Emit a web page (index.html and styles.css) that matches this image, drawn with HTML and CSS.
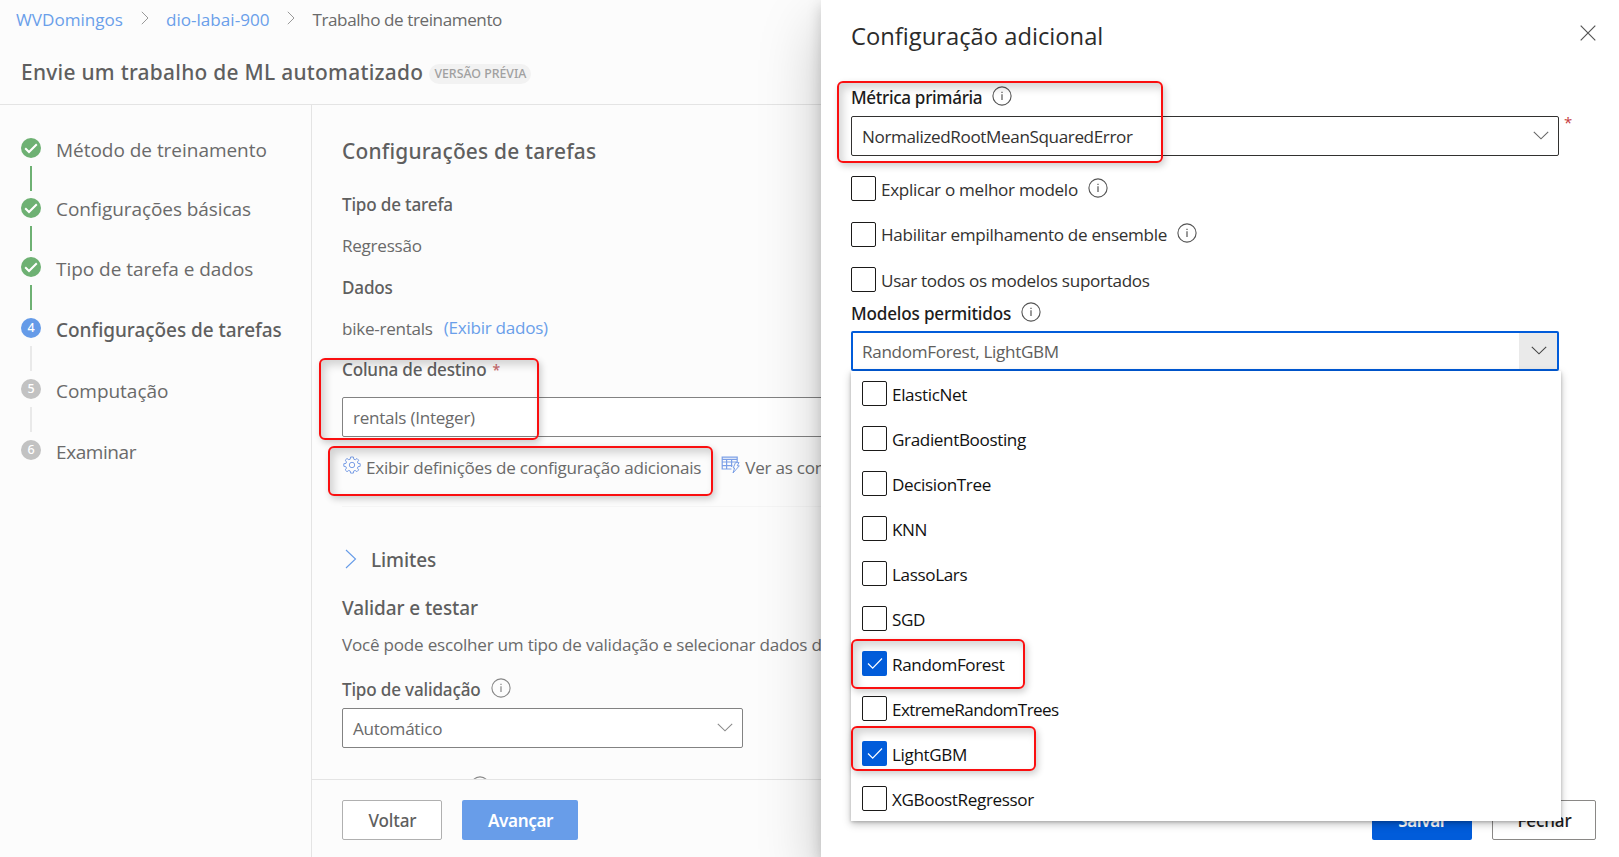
FILE: index.html
```html
<!DOCTYPE html>
<html lang="pt-BR">
<head>
<meta charset="utf-8">
<title>Envie um trabalho de ML automatizado</title>
<link rel="stylesheet" href="styles.css">
</head>
<body>
<svg class="defs" width="0" height="0">
  <symbol id="info" viewBox="0 0 20 20"><circle cx="10" cy="10" r="9.1" fill="none" stroke="currentColor" stroke-width="1.1"/><path d="M10 8.2V14M10 5.7V7" fill="none" stroke="currentColor" stroke-width="1.2"/></symbol>
  <symbol id="down" viewBox="0 0 16 9"><path d="M.8.8L8 7.8L15.2.8" fill="none" stroke="currentColor" stroke-width="1.1"/></symbol>
  <symbol id="right" viewBox="0 0 8 14"><path d="M.8.8L7 7L.8 13.2" fill="none" stroke="currentColor" stroke-width="1"/></symbol>
  <symbol id="done" viewBox="0 0 20 20"><circle cx="10" cy="10" r="10" fill="#6eb173"/><path d="M4.2 10.3L8 14L15.8 6.2" fill="none" stroke="#fff" stroke-width="2"/></symbol>
  <symbol id="tick" viewBox="0 0 25 25"><path d="M6 12.5L10.7 17.2L20 7.5" fill="none" stroke="#fff" stroke-width="1.2"/></symbol>
</svg>

<div class="page">
  <nav class="crumbs">
    <a class="link wide">WVDomingos</a><svg class="crumb-sep"><use href="#right"/></svg>
    <a class="link wide">dio-labai-900</a><svg class="crumb-sep"><use href="#right"/></svg>
    <span class="current">Trabalho de treinamento</span>
  </nav>
  <header class="title-row">
    <h1>Envie um trabalho de ML automatizado</h1>
    <span class="badge">VERSÃO PRÉVIA</span>
  </header>
  <div class="body">
    <aside class="steps">
      <div class="step done"><div class="rail"><svg class="dot"><use href="#done"/></svg><i></i></div><span>Método de treinamento</span></div>
      <div class="step done"><div class="rail"><svg class="dot"><use href="#done"/></svg><i></i></div><span class="raised">Configurações básicas</span></div>
      <div class="step done"><div class="rail"><svg class="dot"><use href="#done"/></svg><i></i></div><span>Tipo de tarefa e dados</span></div>
      <div class="step active"><div class="rail"><b class="dot">4</b><i></i></div><span>Configurações de tarefas</span></div>
      <div class="step"><div class="rail"><b class="dot">5</b><i></i></div><span>Computação</span></div>
      <div class="step last"><div class="rail"><b class="dot">6</b></div><span>Examinar</span></div>
    </aside>
    <main class="main">
      <section class="content">
        <h2>Configurações de tarefas</h2>
        <div class="row strong mt-task">Tipo de tarefa</div>
        <div class="row mt-a">Regressão</div>
        <div class="row strong mt-b">Dados</div>
        <div class="row mt-a">bike-rentals <a class="link data-link">(Exibir dados)</a></div>
        <div class="row strong mt-a">Coluna de destino <span class="req">*</span></div>
        <div class="field target">rentals (Integer)</div>
        <div class="row actions">
          <svg class="gear" viewBox="0 0 18 18"><g fill="none" stroke="currentColor"><path d="M7.6 1H10.4L10.8 3.2L12.2 3.8L14 2.5L15.7 4.2L14.4 6L15 7.4L17.2 7.7V10.3L15 10.7L14.4 12.1L15.7 13.9L13.9 15.7L12.1 14.4L10.7 15L10.4 17.1H7.6L7.2 15L5.8 14.4L4 15.7L2.2 13.9L3.5 12.1L2.9 10.7L.8 10.3V7.7L3 7.4L3.5 6L2.2 4.2L4 2.5L5.8 3.7L7.2 3.2Z"/><circle cx="9" cy="9" r="2.7"/></g></svg>
          <span class="action">Exibir definições de configuração adicionais</span>
          <svg class="sheet" viewBox="0 0 19 18"><path d="M10.5 13H1.2V1.2H16.2V6M1 3.3H16.2M1.2 6H16M1.2 9.6H11.5M5.6 3.3V13M10.6 3.3V11" fill="none" stroke="currentColor" stroke-width="1.2"/><path d="M14.5 6.6H18L16.2 9.8H18.3L12 17L13.6 12H12.2Z" fill="#fcfcfc" stroke="currentColor"/></svg>
          <span class="action">Ver as configurações</span>
        </div>
        <hr>
        <div class="row big limits"><svg class="expand" viewBox="0 0 12 20"><path d="M1 1L10.5 10L1 19" fill="none" stroke="currentColor" stroke-width="1.1"/></svg>Limites</div>
        <div class="row big mt-validate">Validar e testar</div>
        <div class="row mt-desc">Você pode escolher um tipo de validação e selecionar dados de teste</div>
        <div class="row strong mt-type">Tipo de validação <svg class="info"><use href="#info"/></svg></div>
        <div class="field validation">Automático <svg class="caret"><use href="#down"/></svg></div>
        <div class="cut"><svg class="info"><use href="#info"/></svg></div>
      </section>
      <footer class="footer">
        <button class="btn">Voltar</button>
        <button class="btn primary">Avançar</button>
      </footer>
    </main>
  </div>
</div>

<aside class="panel">
  <div class="panel-head">
    <h2>Configuração adicional</h2>
    <svg class="close" viewBox="0 0 16 16"><path d="M.7.7L15.3 15.3M15.3.7L.7 15.3" stroke="currentColor" stroke-width="1.2"/></svg>
  </div>
  <div class="row strong metric-label">Métrica primária <svg class="info"><use href="#info"/></svg></div>
  <div class="metric"><div class="field">NormalizedRootMeanSquaredError <svg class="caret"><use href="#down"/></svg></div><span class="star">*</span></div>
  <div class="checks">
    <div class="check"><i class="box"></i><span>Explicar o melhor modelo</span><svg class="info"><use href="#info"/></svg></div>
    <div class="check"><i class="box"></i><span>Habilitar empilhamento de ensemble</span><svg class="info"><use href="#info"/></svg></div>
    <div class="check"><i class="box"></i><span>Usar todos os modelos suportados</span></div>
  </div>
  <div class="row strong models-label">Modelos permitidos <svg class="info"><use href="#info"/></svg></div>
  <div class="combo">
    <div class="field focus"><span>RandomForest, LightGBM</span><div class="toggle"><svg class="caret"><use href="#down"/></svg></div></div>
    <div class="menu">
      <div class="check"><i class="box"></i><span>ElasticNet</span></div>
      <div class="check"><i class="box"></i><span>GradientBoosting</span></div>
      <div class="check"><i class="box"></i><span>DecisionTree</span></div>
      <div class="check"><i class="box"></i><span>KNN</span></div>
      <div class="check"><i class="box"></i><span>LassoLars</span></div>
      <div class="check"><i class="box"></i><span>SGD</span></div>
      <div class="check"><i class="box on"><svg><use href="#tick"/></svg></i><span>RandomForest</span></div>
      <div class="check tight"><i class="box"></i><span>ExtremeRandomTrees</span></div>
      <div class="check"><i class="box on"><svg><use href="#tick"/></svg></i><span>LightGBM</span></div>
      <div class="check"><i class="box"></i><span>XGBoostRegressor</span></div>
    </div>
  </div>
  <div class="panel-foot">
    <button class="btn primary">Salvar</button>
    <button class="btn">Fechar</button>
  </div>
</aside>

<div class="mark mark-target"></div>
<div class="mark mark-settings"></div>
<div class="mark mark-metric"></div>
<div class="mark mark-forest"></div>
<div class="mark mark-light"></div>
</body>
</html>
```
FILE: styles.css
```css
* { box-sizing: border-box; }
body {
  margin: 0;
  width: 1619px;
  height: 857px;
  overflow: hidden;
  position: relative;
  background: #fcfcfc;
  color: #6a6a6a;
  font: 400 17.1px/24px "Open Sans", "Noto Sans", sans-serif;
  letter-spacing: -.27px;
  white-space: nowrap;
}
svg { display: block; flex: none; }
.defs { position: absolute; }
h1, h2 { margin: 0; font: 500 20.9px/30px "Noto Sans", sans-serif; letter-spacing: .2px; color: #5f5f5f; }
h1 { padding-top: 2px; letter-spacing: .28px; }
.link { color: #6a9fea; }
.wide { letter-spacing: 0; }

.page { height: 857px; display: flex; flex-direction: column; }
.crumbs { height: 39px; display: flex; align-items: center; padding-left: 16px; }
.crumb-sep { width: 8px; height: 14px; margin: -3px 17px 0 18px; color: #999; }
.current { letter-spacing: -.42px; }
.title-row { height: 66px; padding: 0 0 1px 21px; display: flex; align-items: center; border-bottom: 1px solid #e4e4e4; }
.badge {
  margin: 6px 0 0 6px; height: 20px; padding: 0 5px; border-radius: 10px; background: #f2f2f2;
  font: 500 12.35px/20px "Noto Sans", sans-serif; letter-spacing: 0; color: #a0a0a0;
}
.body { flex: 1; display: flex; min-height: 0; }

.steps { width: 312px; border-right: 1px solid #e4e4e4; padding: 33px 0 0 21px; display: grid; grid-template-rows: 60px 59px 61px 61px 61px 20px; align-content: start; }
.step { display: flex; gap: 15px; font-size: 19px; line-height: 24px; letter-spacing: -.03px; }
.raised { margin-top: -1px; letter-spacing: -.07px; }
.rail { width: 20px; display: flex; flex-direction: column; align-items: center; }
.rail i { width: 2px; height: 25px; margin-top: 8px; background: #e9e9e9; }
.done i { background: #6eb173; }
.dot { width: 20px; height: 20px; flex: none; }
b.dot { border-radius: 50%; background: #c2c2c2; color: #fff; font: 500 12.5px/20px "Noto Sans", sans-serif; text-align: center; letter-spacing: 0; }
.active b.dot { background: #659be8; }
.active { font-family: "Noto Sans", sans-serif; font-weight: 500; color: #5f5f5f; letter-spacing: -.05px; }
.last { letter-spacing: -.42px; }

.main { flex: 1; display: flex; flex-direction: column; min-width: 0; }
.content { flex: 1; min-height: 0; overflow: hidden; padding: 31px 0 0 30px; }
.row { height: 24px; display: flex; align-items: center; padding-top: 2px; }
.strong { font-family: "Noto Sans", sans-serif; font-weight: 500; letter-spacing: -.18px; color: #5f5f5f; }
.big { padding-top: 0; font: 500 19px/24px "Noto Sans", sans-serif; letter-spacing: -.1px; color: #5f5f5f; }
.mt-task { margin-top: 26px; }
.mt-a { margin-top: 17px; }
.mt-b { margin-top: 18px; }
.data-link { margin: -2px 0 0 11px; }
.req { margin-left: 6px; font-size: 14px; color: #c96a6d; }
.field {
  height: 40px; border: 1px solid #828282; border-radius: 2px; background: #fff;
  display: flex; align-items: center; justify-content: space-between; padding: 1px 9px 0 10px;
}
.target { margin-top: 16px; }
.actions { margin-top: 18px; }
.gear { width: 18px; height: 18px; margin: -6px 0 0 1px; color: #7b9fe6; }
.action { margin-left: 5px; letter-spacing: -.25px; }
.sheet { width: 19px; height: 18px; margin: -6px 0 0 20px; color: #7b9fe6; }
hr { margin: 27px 0 0; border: 0; height: 1px; background: #f5f5f5; }
.limits { margin-top: 41px; }
.expand { width: 12px; height: 20px; margin: -2px 14px 0 3px; color: #659be8; }
.mt-validate { margin-top: 24px; }
.mt-desc { margin-top: 12px; letter-spacing: -.23px; }
.mt-type { margin-top: 21px; }
.info { width: 20px; height: 20px; margin: -5px 0 0 10px; color: #888; }
.validation { width: 401px; margin-top: 7px; }
.caret { width: 16px; height: 9px; margin-top: -3px; color: #8a8a8a; }
.cut .info { margin: 28px 0 0 128px; }
.footer { height: 78px; border-top: 1px solid #e4e4e4; padding: 20px 0 0 30px; display: flex; gap: 20px; }
.btn {
  width: 100px; height: 40px; padding: 2px 0 0 1px; border: 1px solid #b0b0b0; border-radius: 2px; background: #fff; color: #5f5f5f;
  font: 500 17.1px/36px "Noto Sans", sans-serif; letter-spacing: -.15px;
}
.btn.primary { width: 116px; border: 0; background: #689de9; color: #fff; font-weight: 600; letter-spacing: -.38px; }

.panel {
  position: absolute; left: 821px; top: 0; width: 798px; height: 857px; padding: 18px 23px 0 30px;
  background: #fff; color: #323130;
  box-shadow: 0 26px 58px rgba(0, 0, 0, .22), 0 5px 14px rgba(0, 0, 0, .18);
  display: flex; flex-direction: column;
}
.panel-head { display: flex; justify-content: space-between; height: 36px; }
.panel h2 { font: 400 23.75px/36px "Open Sans", sans-serif; letter-spacing: 0; color: #2b2b2b; }
.close { width: 16px; height: 16px; margin-top: 7px; color: #555; }
.panel .strong { color: #1c1c1c; }
.panel .info { color: #555; }
.panel .field { width: 708px; border-color: #323130; letter-spacing: -.38px; }
.panel .metric-label { margin-top: 31px; letter-spacing: -.33px; }
.metric { margin-top: 7px; display: flex; align-items: flex-start; }
.panel .caret { color: #666; }
.star { margin-left: 5px; font-size: 15px; line-height: 12px; height: 13px; color: #c5393d; }
.checks { margin-top: 20px; display: grid; gap: 20.5px; }
.check { display: flex; align-items: center; height: 25px; letter-spacing: -.3px; }
.check span { padding-top: 2px; }
.box { width: 25px; height: 25px; flex: none; border: 1px solid #1b1a19; border-radius: 2px; margin-right: 5px; background: #fff; }
.box.on { border: 0; background: #015cda; }
.box svg { width: 25px; height: 25px; }
.checks .info { margin-top: -2px; }
.models-label { margin-top: 9px; }
.combo { position: relative; margin-top: 6px; }
.panel .field.focus { border: 2px solid #015cda; padding: 0 0 0 9px; letter-spacing: -.32px; color: #605e5c; }
.focus span { padding-top: 2px; }
.toggle { width: 38px; height: 36px; background: #eaeaea; display: flex; align-items: center; justify-content: center; }
.toggle .caret { margin: -2px 0 0 1px; color: #444; }
.menu {
  position: absolute; left: 0; top: 40px; width: 710px; padding-left: 11px; background: #fff; color: #111;
  box-shadow: 0 3px 8px rgba(0, 0, 0, .25), 0 1px 3px rgba(0, 0, 0, .2);
}
.menu .check { height: 45px; letter-spacing: -.37px; }
.menu .tight { letter-spacing: -.6px; }
.panel-foot { margin: auto 0 17px; display: flex; justify-content: flex-end; gap: 20px; }
.panel-foot .btn { width: 104px; border-color: #8a8886; color: #1c1c1c; }
.panel-foot .btn.primary { width: 100px; background: #015cda; color: #fff; }

.mark { position: absolute; border: 2px solid #fa0f10; border-radius: 6px; box-shadow: 2px 3px 7px rgba(0, 0, 0, .2), inset 4px 5px 8px rgba(0, 0, 0, .17); }
.mark-target { left: 319px; top: 358px; width: 220px; height: 82px; }
.mark-settings { left: 328px; top: 446px; width: 385px; height: 50px; }
.mark-metric { left: 837px; top: 81px; width: 326px; height: 82px; }
.mark-forest { left: 851px; top: 639px; width: 174px; height: 50px; }
.mark-light { left: 851px; top: 726px; width: 185px; height: 45px; }
```
